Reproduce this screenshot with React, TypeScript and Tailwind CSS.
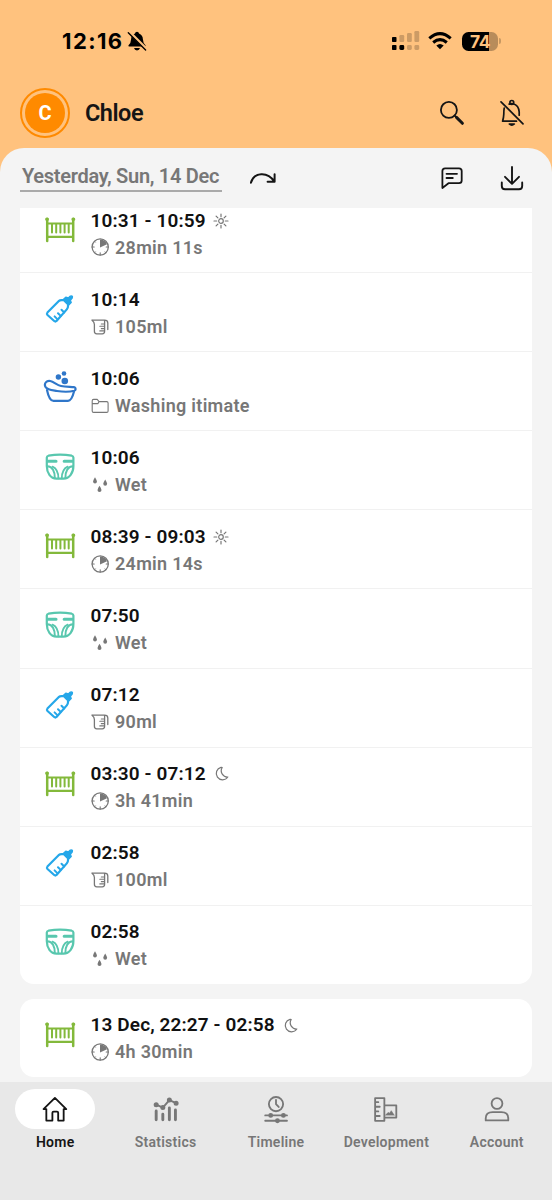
import React from 'react';

type Kind = 'crib' | 'bottle' | 'bath' | 'diaper';
type Detail = 'clock' | 'jug' | 'folder' | 'drops';

interface Entry {
  kind: Kind;
  time: string;
  detail: Detail;
  text: string;
  period?: 'day' | 'night';
}

const entries: Entry[] = [
  { kind: 'crib', time: '10:31 - 10:59', detail: 'clock', text: '28min 11s', period: 'day' },
  { kind: 'bottle', time: '10:14', detail: 'jug', text: '105ml' },
  { kind: 'bath', time: '10:06', detail: 'folder', text: 'Washing itimate' },
  { kind: 'diaper', time: '10:06', detail: 'drops', text: 'Wet' },
  { kind: 'crib', time: '08:39 - 09:03', detail: 'clock', text: '24min 14s', period: 'day' },
  { kind: 'diaper', time: '07:50', detail: 'drops', text: 'Wet' },
  { kind: 'bottle', time: '07:12', detail: 'jug', text: '90ml' },
  { kind: 'crib', time: '03:30 - 07:12', detail: 'clock', text: '3h 41min', period: 'night' },
  { kind: 'bottle', time: '02:58', detail: 'jug', text: '100ml' },
  { kind: 'diaper', time: '02:58', detail: 'drops', text: 'Wet' },
];

const previousDay: Entry[] = [
  { kind: 'crib', time: '13 Dec, 22:27 - 02:58', detail: 'clock', text: '4h 30min', period: 'night' },
];

const KindIcon = ({ kind }: { kind: Kind }) => {
  const base = 'w-[34px] h-[34px] shrink-0';
  if (kind === 'crib') {
    return (
      <svg viewBox="0 0 34 34" className={`${base} text-[#83b93b]`} fill="none" stroke="currentColor" strokeLinecap="round">
        <path d="M4.2 6v22M30.2 6v22" strokeWidth="2.5" />
        <path d="M4 10.5h26M4 23.9h26" strokeWidth="2.2" />
        <path d="M9 11.2v8.3M13.2 11.2v8.3M17.4 11.2v8.3M21.6 11.2v8.3M25.7 11.2v8.3" strokeWidth="2" />
        <path d="M4.2 6.3h-.3M30.2 6.3h.3" strokeWidth="3.6" />
      </svg>
    );
  }
  if (kind === 'bottle') {
    return (
      <svg viewBox="0 0 34 34" className={`${base} text-[#25a7e9]`} fill="none" stroke="currentColor" strokeWidth="2.2" strokeLinecap="round" strokeLinejoin="round">
        <path d="M4.4 20.6 15.6 9.2Q16.8 8.2 18.6 8.2H21L25 12.2V14.2Q25 16 23.8 17.4L13.5 29Q12.4 30 11.2 29L4.5 23Q3.4 21.8 4.4 20.6Z" />
        <path d="M20.3 7.6 25.7 13 28.2 10.6 27.3 8.2 29.2 6Q30.2 3.3 27.4 4.1L25.3 6 22.8 5.2Z" fill="currentColor" strokeWidth="1.4" />
        <path d="M11.6 24.4 14.3 27.1M15 21.2 17.7 23.9M18.5 17.8 21.2 20.5" strokeWidth="2" />
      </svg>
    );
  }
  if (kind === 'bath') {
    return (
      <svg viewBox="0 0 34 34" className={`${base} text-[#2f76c9]`} fill="none" stroke="currentColor" strokeWidth="2.2" strokeLinecap="round" strokeLinejoin="round">
        <path d="M2.4 15.8C.8 12.4 3.5 9.4 7.2 10C11 10.7 13.5 14 18 15C22.5 16 27 15.8 31 16.2C33.2 16.6 33.1 19.2 31.2 19.8C27 20.9 19 20.8 14 20C9 19.2 4 19 2.4 15.8Z" />
        <path d="M4 19C5 24 6.8 29.9 10.5 29.9H25C28.6 29.9 30 24.5 31 20.5" />
        <g fill="currentColor" stroke="none">
          <circle cx="15.4" cy="6" r="2.7" />
          <circle cx="21" cy="2.5" r="2.3" />
          <circle cx="21.8" cy="10" r="3.3" />
        </g>
      </svg>
    );
  }
  return (
    <svg viewBox="0 0 34 34" className={`${base} text-[#58c7ae]`} fill="none" stroke="currentColor" strokeWidth="2.2" strokeLinecap="round" strokeLinejoin="round">
      <path d="M3.8 7.6Q3.9 6.1 5.5 5.7Q17 3.7 28.7 5.7Q30.3 6.1 30.4 7.6V16C30.4 22.8 26.5 28.6 20.5 28.6H13.5C7.5 28.6 3.8 22.8 3.8 16Z" />
      <path d="M5 11.3h8M21.2 11.3h8" strokeWidth="3.1" />
      <path d="M4.2 16.2C9.4 16.2 12 21.5 11.8 28M30 16.2C24.8 16.2 22.2 21.5 22.4 28" strokeWidth="2" />
      <path d="M9.5 16.6C13.5 18.4 15.4 22.5 15.4 28.3M24.7 16.6C20.7 18.4 18.8 22.5 18.8 28.3" strokeWidth="1.8" />
    </svg>
  );
};

const DetailIcon = ({ detail }: { detail: Detail }) => (
  <svg viewBox="0 0 18 18" className="w-[18px] h-[18px] shrink-0" fill="none" stroke="currentColor" strokeWidth="1.3" strokeLinecap="round" strokeLinejoin="round">
    {detail === 'clock' && (
      <>
        <circle cx="9.2" cy="9" r="8.1" />
        <path d="M9 9.4V1.6A7.4 7.4 0 0 1 16 6.2Z" fill="currentColor" stroke="none" />
        <path d="M9.2 14.8V17M1 9h2.2M15.2 9h2" strokeWidth="1.1" />
        <path d="M3.5 14.7l.8-.8M14.9 14.7l-.8-.8M3.5 3.3l.8.8" strokeWidth="1" />
      </>
    )}
    {detail === 'jug' && (
      <>
        <path d="M1 2.2H13.5Q16.8 2.2 16.8 5V11.5M1 2.2Q3.4 4 3.4 6.5V13.3Q3.4 15.8 5.7 15.8H11.3Q13.6 15.8 13.6 13.3V2.5" />
        <path d="M10.3 6h3M8.8 8.3h4.5M10.3 10.6h3M8.8 12.9h4.5" strokeWidth="1.1" />
      </>
    )}
    {detail === 'folder' && (
      <path d="M1.2 14V3.8Q1.2 2.4 2.6 2.4H6.2L8.1 4.6H15.7Q17.1 4.6 17.1 6V14Q17.1 15.4 15.7 15.4H2.6Q1.2 15.4 1.2 14ZM1.2 6.6H7L8.1 4.6" strokeWidth="1.1" />
    )}
    {detail === 'drops' && (
      <g fill="currentColor" stroke="none">
        <path d="M4 1.3Q5.9 4.4 5.9 5.5A1.9 1.9 0 0 1 2.1 5.5Q2.1 4.4 4 1.3Z" />
        <path d="M14.2 3.6Q16.1 6.7 16.1 7.8A1.9 1.9 0 0 1 12.3 7.8Q12.3 6.7 14.2 3.6Z" />
        <path d="M8.5 9.8Q10.5 12.9 10.5 14A2 2 0 0 1 6.5 14Q6.5 12.9 8.5 9.8Z" />
      </g>
    )}
  </svg>
);

const PeriodIcon = ({ period }: { period: 'day' | 'night' }) => (
  <svg viewBox="0 0 16 16" className="w-4 h-4 shrink-0 text-[#777]" fill="none" stroke="currentColor" strokeWidth="1.2" strokeLinecap="round" strokeLinejoin="round">
    {period === 'day' ? (
      <>
        <circle cx="8" cy="8" r="2.3" />
        <path d="M8 1v2.7M8 12.3V15M1 8h2.7M12.3 8H15M3.1 3.1 4.9 4.9M11.1 11.1l1.8 1.8M12.9 3.1l-1.8 1.8M4.9 11.1l-1.8 1.8" />
      </>
    ) : (
      <path d="M8 1.4A6.3 6.3 0 1 0 14.8 11C10.3 11.4 6.4 6.2 9.2 1.5Q8.8 1.3 8 1.4Z" />
    )}
  </svg>
);

const Row = ({ entry }: { entry: Entry }) => (
  <div className="flex h-[79.1px] shrink-0 items-start border-t border-[#f1f1f1] pl-[23px] first:border-transparent">
    <div className="pt-[19px]">
      <KindIcon kind={entry.kind} />
    </div>
    <div className="ml-[13.5px] pt-[13.8px]">
      <div className="flex h-[26px] items-center gap-[7px] text-[19px] font-semibold tracking-[0.12px] text-[#111]">
        <span>{entry.time}</span>
        {entry.period && <PeriodIcon period={entry.period} />}
      </div>
      <div className="flex h-[27.4px] items-center gap-[6.5px] text-lg font-semibold text-[#777]">
        <DetailIcon detail={entry.detail} />
        <span className="tracking-[0.3px]">{entry.text}</span>
      </div>
    </div>
  </div>
);

const StatusBar = () => (
  <div className="flex h-[82px] items-center justify-between pl-[62px] pr-[51px]">
    <div className="flex items-center gap-1 text-black">
      <span className="font-['Inter'] text-[22px] font-bold tracking-[1.4px]">12:16</span>
      <svg viewBox="0 0 20 20" className="w-5 h-5">
        <path d="M10 .8Q11.8.8 12 2.5Q15.8 4 15.9 8.2Q16 12 18.5 14.2Q19 15.5 17.7 15.5H2.3Q1 15.5 1.5 14.2Q4 12 4.1 8.2Q4.2 4 8 2.5Q8.2.8 10 .8ZM7 17H13Q12.4 19.4 10 19.4T7 17Z" fill="currentColor" />
        <path d="M2.4 1 19.6 18.2" stroke="#ffc27e" strokeWidth="3" />
        <path d="M1.3 1.8 18.6 19" stroke="currentColor" strokeWidth="1.4" strokeLinecap="round" />
      </svg>
    </div>
    <div className="flex items-center">
      <svg viewBox="0 0 28 20" className="h-5 w-7">
        <rect x="0" y="6" width="4.5" height="5" rx="0.8" />
        <rect x="0" y="14" width="4.5" height="5" rx="0.8" />
        <rect x="7.4" y="14" width="4.8" height="5" rx="1.4" />
        <g fill="#cc9b65">
          <rect x="7.4" y="4" width="4.8" height="7" rx="1.2" />
          <rect x="15" y="2" width="4.8" height="9" rx="1.2" />
          <rect x="22.4" y="0" width="4.8" height="11" rx="1.2" />
          <rect x="15" y="14" width="4.8" height="5" rx="1.4" />
          <rect x="22.4" y="14" width="4.8" height="5" rx="1.4" />
        </g>
      </svg>
      <svg viewBox="0 0 24 18" className="ml-[8px] h-[18px] w-6" fill="none" stroke="currentColor" strokeWidth="3">
        <path d="M1.3 6.3Q12-3.1 22.7 6.3M5.2 10.5Q12 4.7 18.8 10.5" />
        <path d="M8.3 13.6Q12 10.5 15.7 13.6L12 17.3Z" fill="currentColor" stroke="none" />
      </svg>
      <div className="ml-[10px] flex h-[19px] w-9 items-center justify-center rounded-[6.5px] bg-[linear-gradient(90deg,#000_74%,#b88c5b_74%)] font-['Inter'] text-[17.5px] leading-[19px] font-bold tracking-[-0.6px] text-[#ffc27e]">
        74
      </div>
      <div className="ml-px h-[6px] w-[2px] rounded-r bg-[#c79862]" />
    </div>
  </div>
);

const Header = () => (
  <header className="flex h-[62px] items-center pl-5 pr-[27px] text-[#151515]">
    <div className="flex h-[50px] w-[50px] items-center justify-center rounded-full border-2 border-[#ff8a00]">
      <div className="flex h-10 w-10 items-center justify-center rounded-full bg-[#ff8a00] text-xl font-bold text-white">C</div>
    </div>
    <h1 className="ml-[15px] flex-1 pt-[2px] text-[23.5px] font-semibold tracking-[-0.5px]">Chloe</h1>
    <svg viewBox="0 0 26 26" className="h-[26px] w-[26px]" fill="none" stroke="currentColor" strokeLinecap="round">
      <circle cx="9.9" cy="9.9" r="8" strokeWidth="1.8" />
      <path d="M15.5 15.4 17 17" strokeWidth="1.8" />
      <path d="M17.5 17.4 23.4 23.3" strokeWidth="3" />
    </svg>
    <svg viewBox="0 0 26 28" className="ml-[34px] h-7 w-[26px]" fill="none" stroke="currentColor" strokeWidth="1.7" strokeLinecap="round" strokeLinejoin="round">
      <path d="M5.2 9.2Q4.8 11 4.8 15Q4.7 18.5 3.6 22.2H17.5M10.2 5.1Q12 4.3 14.2 4.8C17.7 5.8 19.9 9 20.2 13V16.2" />
      <circle cx="12.8" cy="3.4" r="1.9" />
      <path d="M10.3 25Q12.8 27.4 15.3 25Z" fill="currentColor" />
      <path d="M2 2.8 24 24.8" />
    </svg>
  </header>
);

const DayBar = () => (
  <div className="flex h-[60px] shrink-0 items-center pl-5 pr-7 text-[#151515]">
    <div className="-mt-1 flex h-8 w-[202px] items-start border-b-2 border-[#aaa] pl-0.5 text-xl font-semibold leading-[33px] tracking-[-0.29px] whitespace-nowrap text-[#777]">
      Yesterday, Sun, 14 Dec
    </div>
    <svg viewBox="0 0 28 16" className="ml-7 h-4 w-7" fill="none" stroke="currentColor" strokeWidth="2" strokeLinecap="round" strokeLinejoin="round">
      <path d="M.9 12.8C4 2 17.5 1.2 24.4 11.6M24.6 4.2V11.8H17.6" />
    </svg>
    <div className="flex-1" />
    <svg viewBox="0 0 24 24" className="h-6 w-6" fill="none" stroke="currentColor" strokeWidth="1.8" strokeLinecap="round" strokeLinejoin="round">
      <path d="M2.4 22V5Q2.4 2.3 5.1 2.3H19Q21.7 2.3 21.7 5V14.5Q21.7 17.2 19 17.2H8.5L2.4 22ZM6.5 7.8H17M6.5 12H12.8" />
    </svg>
    <svg viewBox="0 0 24 26" className="ml-9 h-[26px] w-6" fill="none" stroke="currentColor" strokeWidth="1.9" strokeLinecap="round" strokeLinejoin="round">
      <path d="M12 2V18.5M5 11.8 12 18.8 19 11.8M1.8 17.5V21Q1.8 24.3 5 24.3H19Q22.2 24.3 22.2 21V17.5" />
    </svg>
  </div>
);

const tabs = [
  {
    label: 'Home',
    icon: <path d="M1.6 13.6 13.4 2 25.2 13.6H22.5V25.5H16.8V17.5Q16.8 16.3 15.6 16.3H12.2Q10.8 16.3 10.8 17.5V25.5H4.5V13.6Z" />,
  },
  {
    label: 'Statistics',
    icon: (
      <>
        <path d="M3.3 9 10.2 12 17 4.2 24 7.5" strokeWidth="2" />
        <path d="M3.3 15.5V24.7M10.2 19V24.7M17 12.5V24.7M23.3 14.5V24.7" strokeWidth="3" />
        <path d="M3.3 9h.01M10.2 12h.01M17 4.2h.01M24 7.5h.01" strokeWidth="5.2" />
      </>
    ),
  },
  {
    label: 'Timeline',
    icon: (
      <>
        <circle cx="13.5" cy="8.4" r="7.4" />
        <path d="M13.5 4V8.5L16.3 11.4M2.3 20.2H24.9M2.3 25.7H24.9" />
        <path d="M8 20.2h.01M21.2 20.2h.01M15 25.7h.01" strokeWidth="5" />
      </>
    ),
  },
  {
    label: 'Development',
    icon: (
      <>
        <path d="M2.2 2.2H11.8V25.8H2.2ZM3 6.4H5.5M3 11.2H7M3 16H5.5M3 20.8H7M12 9.8H24.2V22.4H12" />
        <path d="M13 19.8 15.8 17 17 18 19 15.2 22 19.8Z" fill="currentColor" strokeWidth="0.5" />
      </>
    ),
  },
  {
    label: 'Account',
    icon: (
      <>
        <circle cx="13.5" cy="7.8" r="5.6" />
        <path d="M1.8 25.4V23Q1.8 16.7 9 16.7H18Q25.2 16.7 25.2 23V25.4Z" />
      </>
    ),
  },
];

const TabBar = () => (
  <nav className="grid h-[118px] shrink-0 grid-cols-5 items-start bg-[#e8e8e8] pt-[7px]">
    {tabs.map((tab, i) => (
      <div key={tab.label} className={`flex flex-col items-center ${i === 0 ? 'text-[#151515]' : 'text-[#777]'}`}>
        <div className={`flex h-10 w-20 items-center justify-center rounded-full ${i === 0 ? 'bg-white' : ''}`}>
          <svg viewBox="0 0 27 27" className="h-[26px] w-[26px] overflow-visible" fill="none" stroke="currentColor" strokeWidth="1.9" strokeLinecap="round" strokeLinejoin="round">
            {tab.icon}
          </svg>
        </div>
        <span className="mt-[3px] text-sm font-semibold tracking-[0.25px]">{tab.label}</span>
      </div>
    ))}
  </nav>
);

const App = () => {
  return (
    <div className="flex h-[1200px] w-[552px] flex-col overflow-hidden bg-[#ffc27e] font-['Roboto',sans-serif]">
      <StatusBar />
      <Header />
      <main className="mt-1 flex min-h-0 flex-1 flex-col overflow-hidden rounded-t-[24px] bg-[#f4f4f4]">
        <DayBar />
        <div className="flex min-h-0 flex-1 flex-col overflow-hidden px-5">
          <div className="-mt-[15px] shrink-0 rounded-[14px] bg-white">
            {entries.map((entry, i) => (
              <Row key={i} entry={entry} />
            ))}
          </div>
          <div className="mt-[15px] h-[78px] shrink-0 rounded-[14px] bg-white">
            <div className="-mt-px">
              {previousDay.map((entry, i) => (
                <Row key={i} entry={entry} />
              ))}
            </div>
          </div>
        </div>
      </main>
      <TabBar />
    </div>
  );
};

export default App;
